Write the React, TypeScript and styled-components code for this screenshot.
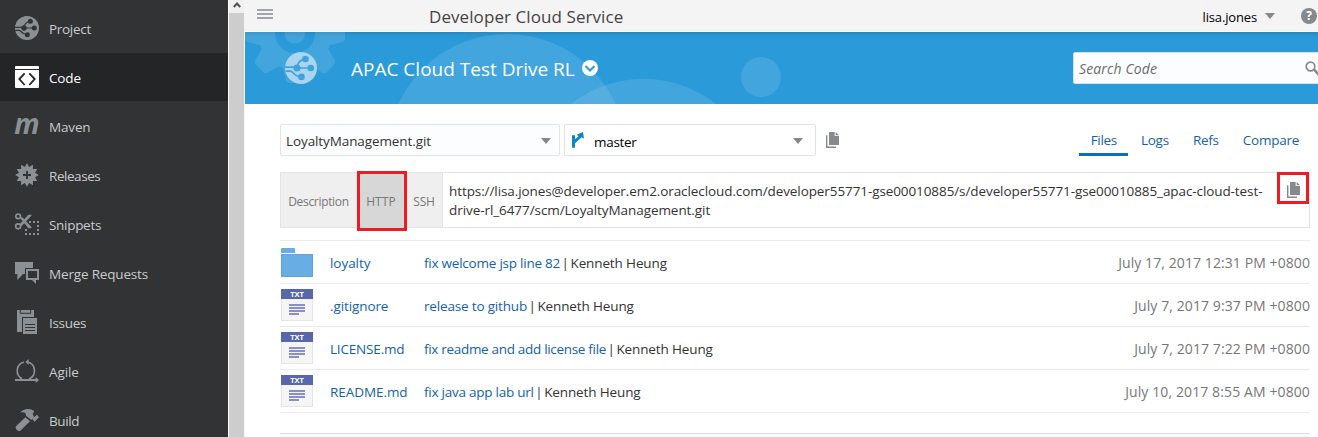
import React from 'react';
import styled, { createGlobalStyle, css } from 'styled-components';

const GlobalStyle = createGlobalStyle`
  * { box-sizing: border-box; }
  body { margin: 0; background: #fff; overflow: hidden; }
  svg { display: block; flex: none; }
`;

const Label = styled.span<{ $ls?: number }>`
  white-space: nowrap;
  letter-spacing: ${(p) => p.$ls ?? 0}px;
`;

const Page = styled.div`
  display: flex;
  height: 437px;
  overflow: hidden;
  font: 13.5px/20px "Open Sans", sans-serif;
  color: #333;
`;

/* Sidebar */
const Sidebar = styled.nav`
  flex: none;
  width: 228px;
  padding-top: 4px;
  display: flex;
  flex-direction: column;
  background: #323335;
  overflow: hidden;
`;
const NavItem = styled.a<{ $active?: boolean }>`
  flex: none;
  height: 49px;
  border-bottom: 1px solid #323335;
  padding: 0 15px;
  display: flex;
  align-items: center;
  gap: 10px;
  color: #c8cacc;
  ${(p) => p.$active && css`
    background: #242527;
    color: #fff;
  `}
  --bg: ${(p) => (p.$active ? '#242527' : '#323335')};
  --fg: ${(p) => (p.$active ? '#fff' : '#8b9095')};
  ${Label} { padding-top: 1px; }
`;
const Scrollbar = styled.div`
  flex: none;
  width: 17px;
  border-left: 1px solid #fff;
  border-right: 1px solid #f4f4f4;
  background: #f0f0f0;
  display: flex;
  flex-direction: column;
`;
const ScrollArrow = styled.div`
  height: 13px;
  display: flex;
  justify-content: center;
  padding-top: 2px;
`;
const Thumb = styled.div`
  flex: 1;
  background: #cdcdcd;
`;

/* Main */
const Main = styled.main`
  flex: 1;
  min-width: 0;
  display: flex;
  flex-direction: column;
`;
const TopBar = styled.header`
  flex: none;
  height: 32px;
  padding-left: 12px;
  display: flex;
  align-items: center;
  background: #f4f4f4;
  border-bottom: 1px solid #fff;
`;
const Burger = styled.div`
  width: 16px;
  height: 10px;
  margin-top: -3px;
  display: flex;
  flex-direction: column;
  justify-content: space-between;
  &::before, &::after, & > i { content: ''; display: block; height: 2px; background: #a1a3ab; }
`;
const AppTitle = styled.h1`
  margin: 2px 0 0 156px;
  font: 17px/24px "Open Sans", sans-serif;
  color: #444;
`;
const UserMenu = styled.div`
  margin-left: auto;
  display: flex;
  align-items: center;
  gap: 8px;
  font-size: 13px;
  color: #000;
  ${Label} { padding-top: 3px; }
`;
const HelpBadge = styled.div`
  flex: none;
  width: 16px;
  height: 16px;
  margin: 1px 1px 0 26px;
  border-radius: 50%;
  background: #84898e;
  color: #fff;
  font: bold 12px/16px "Open Sans", sans-serif;
  text-align: center;
`;

const Banner = styled.section`
  position: relative;
  flex: none;
  height: 72px;
  padding-left: 40px;
  display: flex;
  align-items: center;
  background: linear-gradient(#2789c1 0, #2b97d4 4px, #2b9ad9 9px);
`;
const Backdrop = styled.svg`
  position: absolute;
  left: 0;
  top: 0;
`;
const BannerLogo = styled.div`
  position: relative;
  --fg: #aad5ef;
  --bg: #3fa3dc;
`;
const ProjectTitle = styled.h2`
  position: relative;
  margin: 2px 7px 0 34px;
  font: 19px/28px "Open Sans", sans-serif;
  color: #fff;
`;
const DropBadge = styled.svg`
  position: relative;
`;
const SearchBox = styled.div`
  position: relative;
  flex: none;
  width: 260px;
  height: 32px;
  margin: 0 -15px 0 auto;
  padding: 0 5px 0 5px;
  display: flex;
  align-items: center;
  justify-content: space-between;
  border: 1px solid #d6dfe6;
  border-radius: 2px;
  background: #fcfdfe;
  font: italic 14px/20px "Open Sans", sans-serif;
  color: #6c6c6c;
  ${Label} { padding-top: 2px; }
`;

const Content = styled.div`
  flex: 1;
  padding: 20px 8px 0 35px;
  display: flex;
  flex-direction: column;
`;
const Toolbar = styled.div`
  flex: none;
  height: 32px;
  display: flex;
  align-items: center;
`;
const Select = styled.div<{ $w: number; $tint?: boolean }>`
  width: ${(p) => p.$w}px;
  height: 32px;
  margin-right: 4px;
  padding: 0 ${(p) => (p.$tint ? 8 : 12)}px 0 5px;
  display: flex;
  align-items: center;
  border: 1px solid #dfe4e7;
  border-radius: 2px;
  background: ${(p) => (p.$tint ? '#fcfdfe' : '#fff')};
  color: ${(p) => (p.$tint ? '#333' : '#000')};
  ${Label} { padding-top: ${(p) => (p.$tint ? 1 : 3)}px; margin-right: auto; }
`;
const BranchIcon = styled.svg`
  margin: 0 9px 0 2px;
`;
const Caret = styled.i`
  margin-top: 1px;
  border: 5px solid transparent;
  border-top: 6px solid #84888c;
  border-bottom: 0;
`;
const CopySlot = styled.div`
  margin-left: 6px;
`;
const Tabs = styled.div`
  margin-left: auto;
  margin-right: 11px;
  align-self: stretch;
  display: flex;
  gap: 24px;
  color: #145fae;
`;
const Tab = styled.a<{ $active?: boolean }>`
  height: 32px;
  padding-top: 6px;
  ${(p) => p.$active && css`
    padding: 6px 11px 0 12px;
    margin-right: -11px;
    border-bottom: 3px solid #0a6ccb;
  `}
`;

const UrlPanel = styled.div`
  flex: none;
  height: 56px;
  margin-top: 16px;
  display: flex;
  border: 1px solid #dfe4e7;
`;
const Protocols = styled.div`
  width: 162px;
  display: flex;
  align-items: center;
  background: #efefef;
  border-right: 1px solid #dfe4e7;
  font-size: 12px;
  color: #777;
`;
const Protocol = styled.div<{ $w: number; $marked?: boolean }>`
  flex: none;
  width: ${(p) => p.$w}px;
  height: 54px;
  display: flex;
  align-items: center;
  justify-content: center;
  padding: 4px 1px 0 0;
  ${(p) => p.$marked && css`
    height: 60px;
    margin-top: 2px;
    border: 3px solid #ed1c24;
    background: #d7d7d7;
    padding: 1px 2px 0 0;
  `}
`;
const Url = styled.div`
  flex: 1;
  padding: 9px 0 0 6px;
  line-height: 19px;
  display: flex;
  flex-direction: column;
`;
const CopyButton = styled.div`
  flex: none;
  width: 32px;
  height: 32px;
  margin-top: -1px;
  padding-top: 3px;
  border: 3px solid #ed1c24;
  display: flex;
  align-items: center;
  justify-content: center;
`;

const FileList = styled.div`
  flex: none;
  margin-top: 12px;
  border-top: 1px solid #ebebeb;
`;
const FileRow = styled.div`
  height: 43px;
  padding-left: 1px;
  display: grid;
  grid-template-columns: 49px 94px 1fr auto;
  align-items: center;
  border-bottom: 1px solid #ebebeb;
  color: #145fae;
  ${Label} { padding-top: 2px; }
`;
const Commit = styled.div`
  display: flex;
  gap: 1.5px;
`;
const Author = styled.span`
  color: #333;
  display: flex;
  gap: 1.5px;
`;
const DateCell = styled.div`
  padding-top: 2px;
  font-size: 14px;
  color: #777;
`;
const FolderIcon = styled.div`
  width: 32px;
  &::before { content: ''; display: block; width: 14px; height: 5px; margin-bottom: 1px; background: #68aee5; border-radius: 1px 1px 0 0; }
  &::after { content: ''; display: block; height: 23px; background: #68aee5; border-radius: 1px; box-shadow: inset 0 0 0 1px #5ba3dc; }
`;
const TxtIcon = styled.div`
  width: 32px;
  height: 32px;
  border: 1px solid #e4e4e4;
  border-top: 0;
  background: #f5f5f5;
`;
const TxtHead = styled.div`
  height: 10px;
  margin: 0 -1px 5px;
  background: #5866ac;
  color: #fff;
  font: bold 7.5px/10px "Open Sans", sans-serif;
  text-align: center;
`;
const TxtLine = styled.div<{ $w?: number }>`
  width: ${(p) => p.$w ?? 16}px;
  height: 2px;
  margin: 0 0 1px 7px;
  background: #8a8fcb;
`;
const Footer = styled.div`
  flex: none;
  height: 5px;
  margin-top: 20px;
  border-top: 1px solid #d5dfe8;
  background: #f9fbfd;
`;

/* Icons: all drawn on a 72-unit-wide grid, three units to a pixel */
const FG = 'var(--fg)';
const BG = 'var(--bg)';
function Glyph({ h, w = 72, size = 24, children }: { h: number; w?: number; size?: number; children: React.ReactNode }) {
  return <svg width={size} height={(size * h) / w} viewBox={`0 0 ${w} ${h}`} fill={FG} overflow="visible">{children}</svg>;
}
const LogoGlyph = ({ size = 24 }: { size?: number }) => (
  <Glyph h={72} size={size}>
    <circle cx="36" cy="36" r="36" />
    <g fill={BG}>
      <circle cx="46" cy="16" r="7.500" /><circle cx="27" cy="36" r="8" />
      <circle cx="58" cy="36" r="7.500" /><circle cx="37" cy="56" r="7.500" />
    </g>
    <g fill="none" stroke={BG} strokeWidth="3.600">
      <path d="M27 36H58M27 34C29 22 36 17 46 16M0 34H22M1 43H12C20 43 18 55 37 56" />
    </g>
  </Glyph>
);
const CodeGlyph = () => (
  <Glyph h={66}>
    <path d="M2 0H70L72 2V9H0V2ZM0 12H72V64L70 66H2L0 64Z" />
    <path d="M29 22L13 39L29 57M43 22L59 39L43 57" fill="none" stroke={BG} strokeWidth="5.5" />
  </Glyph>
);
const MavenText = styled.text`
  font: italic bold 88px "Open Sans", sans-serif;
`;
const MavenGlyph = () => (
  <Glyph h={54}>
    <MavenText x="-2" y="50" textLength="76" lengthAdjust="spacingAndGlyphs">m</MavenText>
  </Glyph>
);
const burst = Array.from({ length: 24 }, (_, i) => {
  const r = i % 2 ? 25 : 35.5;
  const a = (i * Math.PI) / 12 - Math.PI / 2;
  return `${(36 + r * Math.cos(a)).toFixed(1)},${(36 + r * Math.sin(a)).toFixed(1)}`;
}).join(' ');
const ReleaseGlyph = () => (
  <Glyph h={72}>
    <polygon points={burst} />
    <path d="M36 24V48M24 36H48" stroke={BG} strokeWidth="5.5" />
  </Glyph>
);
const dots = [[42, 24], [54, 24], [66, 24], [66, 36], [66, 48], [66, 60], [54, 60], [42, 60], [30, 60], [30, 48]];
const SnippetGlyph = () => (
  <Glyph h={66}>
    <g fill="none" stroke={FG} strokeWidth="5">
      <circle cx="9.5" cy="10" r="7" /><circle cx="9.5" cy="40" r="7.5" />
    </g>
    <path d="M15 14L22 13L50 43L48 46H40ZM14 34L40 5H50L49 8L20 39Z" />
    {dots.map(([x, y]) => <rect key={`${x}-${y}`} x={x} y={y} width="6" height="6" />)}
  </Glyph>
);
const MergeGlyph = () => (
  <Glyph h={66}>
    <path d="M0 0H54V36H24L7 54V36H0Z" />
    <path d="M30 18H75V54H30Z" fill={BG} />
    <path fillRule="evenodd" d="M33 21H72V54H63V66L51 54H33ZM39 27V48H66V27Z" />
  </Glyph>
);
const IssuesGlyph = () => (
  <Glyph h={72}>
    <path d="M6 0H57V66H6Z" />
    <path d="M16 0V10H47V0" fill="none" stroke={BG} strokeWidth="3" />
    <path d="M21 21H69V75H21Z" fill={BG} />
    <path d="M24 24H66V72H24Z" />
    <path d="M30 43.5H60M30 52.5H60M30 61.5H60" stroke={BG} strokeWidth="3" />
  </Glyph>
);
const AgileGlyph = () => (
  <Glyph h={72}>
    <g fill="none" stroke={FG} strokeWidth="5">
      <path d="M27 9A27 27 0 0 0 21 59M38 9A27 27 0 0 1 42 60" />
      <path d="M0 63H66" strokeWidth="6" />
    </g>
    <path d="M31 9L41 0V18ZM62 54L72 63L62 72Z" />
  </Glyph>
);
const BuildGlyph = () => (
  <Glyph h={66}>
    <path d="M31 25L45 37L16 65Q10 68 5 62Q-1 56 3 52Z" />
    <path d="M15 11C27 -2 45 -3 58 7L53 14L57 24L49 33L33 20C34 11 26 8 15 11Z" />
    <path d="M51 29L66 17L72 25L59 38Z" />
  </Glyph>
);
const CopyIcon = () => (
  <svg width="13" height="16" viewBox="0 0 39 48">
    <path d="M9 0H26V12H39V39H9ZM29 0L39 9.500H29Z" fill="#878a8c" />
    <path d="M2 10V45.500H30" fill="none" stroke="#878a8c" strokeWidth="4.500" />
  </svg>
);

const nav: { text: string; ls: number; icon: React.ReactNode; active?: boolean }[] = [
  { text: 'Project', ls: -0.3, icon: <LogoGlyph /> },
  { text: 'Code', ls: -0.15, icon: <CodeGlyph />, active: true },
  { text: 'Maven', ls: -0.15, icon: <MavenGlyph /> },
  { text: 'Releases', ls: -0.45, icon: <ReleaseGlyph /> },
  { text: 'Snippets', ls: -0.3, icon: <SnippetGlyph /> },
  { text: 'Merge Requests', ls: -0.17, icon: <MergeGlyph /> },
  { text: 'Issues', ls: -0.3, icon: <IssuesGlyph /> },
  { text: 'Agile', ls: -0.1, icon: <AgileGlyph /> },
  { text: 'Build', ls: -0.4, icon: <BuildGlyph /> },
];

const files = [
  { folder: true, name: 'loyalty', nls: -0.05, msg: 'fix welcome jsp line 82', mls: -0.23, date: 'July 17, 2017 12:31 PM +0800', dls: 0.085 },
  { name: '.gitignore', nls: -0.1, msg: 'release to github', mls: -0.17, date: 'July 7, 2017 9:37 PM +0800', dls: 0.09 },
  { name: 'LICENSE.md', nls: -0.18, msg: 'fix readme and add license file', mls: -0.31, date: 'July 7, 2017 7:22 PM +0800', dls: 0.09 },
  { name: 'README.md', nls: -0.06, msg: 'fix java app lab url', mls: -0.24, date: 'July 10, 2017 8:55 AM +0800', dls: 0.11 },
];

const gearTeeth = [0, 45, 90, 135, 180, 225, 270, 315];

export default function App() {
  return (
    <Page>
      <GlobalStyle />
      <Sidebar>
        {nav.map((n) => (
          <NavItem key={n.text} $active={n.active}>
            {n.icon}
            <Label $ls={n.ls}>{n.text}</Label>
          </NavItem>
        ))}
      </Sidebar>
      <Scrollbar>
        <ScrollArrow>
          <svg width="8" height="6" viewBox="0 0 8 6"><path d="M0.800 5L4 1.500L7.200 5" fill="none" stroke="#505050" strokeWidth="2" /></svg>
        </ScrollArrow>
        <Thumb />
      </Scrollbar>
      <Main>
        <TopBar>
          <Burger><i /></Burger>
          <AppTitle><Label $ls={0.08}>Developer Cloud Service</Label></AppTitle>
          <UserMenu>
            <Label $ls={-0.15}>lisa.jones</Label>
            <Caret />
          </UserMenu>
          <HelpBadge>?</HelpBadge>
        </TopBar>
        <Banner>
          <Backdrop width="1073" height="72" viewBox="245 32 1073 72" fill="#fff" fillOpacity="0.11">
            <mask id="gear">
              <g fill="#fff" fillOpacity="1">
                <circle cx="295" cy="33" r="37" />
                {gearTeeth.map((a) => (
                  <path key={a} transform={`rotate(${a} 295 33)`} d="M282 65L286 80Q287 83 290 83H300Q303 83 304 80L308 65Z" />
                ))}
              </g>
              <circle cx="295" cy="33" r="20" fill="#000" fillOpacity="1" />
              <circle cx="295" cy="33" r="10.500" fill="#fff" fillOpacity="1" />
            </mask>
            <rect x="245" y="32" width="110" height="72" mask="url(#gear)" />
            <circle cx="507" cy="153.400" r="119.400" />
            <circle cx="643.500" cy="195" r="116.300" />
            <circle cx="761" cy="77" r="20" />
          </Backdrop>
          <BannerLogo><LogoGlyph size={32} /></BannerLogo>
          <ProjectTitle><Label $ls={0}>APAC Cloud Test Drive RL</Label></ProjectTitle>
          <DropBadge width="16" height="16" viewBox="0 0 16 16">
            <circle cx="8" cy="8" r="8" fill="#fff" />
            <path d="M3.500 6L8 10.500L12.500 6" fill="none" stroke="#2b9ad9" strokeWidth="2" />
          </DropBadge>
          <SearchBox>
            <Label $ls={0.13}>Search Code</Label>
            <svg width="22" height="16" viewBox="0 0 22 16" fill="none" stroke="#84898e">
              <circle cx="5.500" cy="6.500" r="4.300" strokeWidth="1.700" />
              <path d="M9 9.500L14 15" strokeWidth="2.600" />
            </svg>
          </SearchBox>
        </Banner>
        <Content>
          <Toolbar>
            <Select $w={280} $tint>
              <Label $ls={-0.1}>LoyaltyManagement.git</Label>
              <Caret />
            </Select>
            <Select $w={252}>
              <BranchIcon width="13" height="16" viewBox="0 0 39 48">
                <path d="M0 10H9V22L20 13L14 8L33 0L36 20L29 16L9 34V47H0Z" fill="#0d86c4" />
              </BranchIcon>
              <Label $ls={-0.3}>master</Label>
              <Caret />
            </Select>
            <CopySlot><CopyIcon /></CopySlot>
            <Tabs>
              <Tab $active><Label $ls={-0.3}>Files</Label></Tab>
              <Tab><Label $ls={-0.25}>Logs</Label></Tab>
              <Tab><Label $ls={-0.25}>Refs</Label></Tab>
              <Tab><Label $ls={-0.25}>Compare</Label></Tab>
            </Tabs>
          </Toolbar>
          <UrlPanel>
            <Protocols>
              <Protocol $w={76}><Label $ls={-0.32}>Description</Label></Protocol>
              <Protocol $w={50} $marked><Label $ls={0.1}>HTTP</Label></Protocol>
              <Protocol $w={35}><Label $ls={-0.2}>SSH</Label></Protocol>
            </Protocols>
            <Url>
              <Label $ls={-0.09}>https://lisa.jones@developer.em2.oraclecloud.com/developer55771-gse00010885/s/developer55771-gse00010885_apac-cloud-test-</Label>
              <Label $ls={-0.07}>drive-rl_6477/scm/LoyaltyManagement.git</Label>
            </Url>
            <CopyButton><CopyIcon /></CopyButton>
          </UrlPanel>
          <FileList>
            {files.map((f) => (
              <FileRow key={f.name}>
                {f.folder ? <FolderIcon /> : (
                  <TxtIcon>
                    <TxtHead>TXT</TxtHead>
                    <TxtLine /><TxtLine /><TxtLine /><TxtLine $w={10} />
                  </TxtIcon>
                )}
                <Label $ls={f.nls}>{f.name}</Label>
                <Commit>
                  <Label $ls={f.mls}>{f.msg}</Label>
                  <Author><Label>|</Label><Label $ls={-0.13}>Kenneth Heung</Label></Author>
                </Commit>
                <DateCell><Label $ls={f.dls}>{f.date}</Label></DateCell>
              </FileRow>
            ))}
          </FileList>
          <Footer />
        </Content>
      </Main>
    </Page>
  );
}
